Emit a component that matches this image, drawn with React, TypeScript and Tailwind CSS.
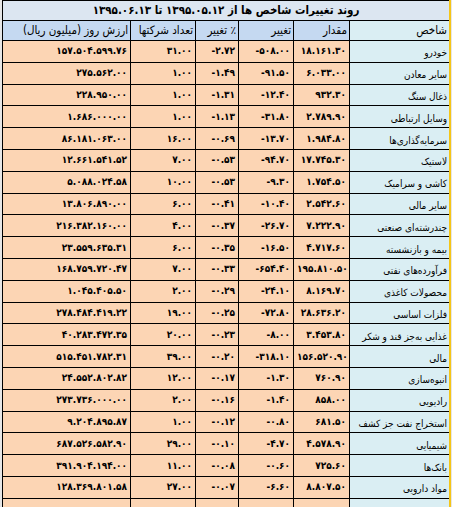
type Row = {
  name: string
  amount: string
  change: string
  percent: string
  count: string
  value: string
}

const rows: Row[] = [
  { name: 'خودرو', amount: '۱۸.۱۶۱.۳۰', change: '-۵۰۸.۰۰', percent: '-۲.۷۲', count: '۳۱.۰۰', value: '۱۵۷.۵۰۴.۵۹۹.۷۶' },
  { name: 'سایر معادن', amount: '۶.۰۳۳.۰۰', change: '-۹۱.۵۰', percent: '-۱.۴۹', count: '۱.۰۰', value: '۲۷۵.۵۶۲.۰۰' },
  { name: 'ذغال سنگ', amount: '۹۳۲.۳۰', change: '-۱۲.۴۰', percent: '-۱.۳۱', count: '۱.۰۰', value: '۲۲۸.۹۵۰.۰۰' },
  { name: 'وسایل ارتباطی', amount: '۲.۷۸۹.۹۰', change: '-۳۱.۸۰', percent: '-۱.۱۳', count: '۱.۰۰', value: '۱.۶۸۶.۰۰۰.۰۰' },
  { name: 'سرمایه‌گذاری‌ها', amount: '۱.۹۸۴.۸۰', change: '-۱۳.۷۰', percent: '-۰.۶۹', count: '۱۶.۰۰', value: '۸۶.۱۸۱.۰۶۳.۰۰' },
  { name: 'لاستیک', amount: '۱۷.۷۴۵.۳۰', change: '-۹۴.۷۰', percent: '-۰.۵۳', count: '۷.۰۰', value: '۱۲.۶۶۱.۵۴۱.۵۲' },
  { name: 'کاشی و سرامیک', amount: '۱.۷۵۴.۵۰', change: '-۹.۳۰', percent: '-۰.۵۳', count: '۱۰.۰۰', value: '۵.۰۸۸.۰۲۴.۵۸' },
  { name: 'سایر مالی', amount: '۲.۵۴۲.۶۰', change: '-۱۰.۴۰', percent: '-۰.۴۱', count: '۶.۰۰', value: '۱۳.۸۰۶.۸۹۰.۰۰' },
  { name: 'چندرشته‌ای صنعتی', amount: '۷.۲۲۲.۹۰', change: '-۲۶.۷۰', percent: '-۰.۳۷', count: '۴.۰۰', value: '۲۱۶.۳۸۲.۱۶۰.۰۰' },
  { name: 'بیمه و بازنشسته', amount: '۴.۷۱۷.۶۰', change: '-۱۶.۵۰', percent: '-۰.۳۵', count: '۶.۰۰', value: '۲۳.۵۵۹.۶۳۵.۳۱' },
  { name: 'فرآورده‌های نفتی', amount: '۱۹۵.۸۱۰.۵۰', change: '-۶۵۴.۴۰', percent: '-۰.۳۳', count: '۷.۰۰', value: '۱۶۸.۷۵۹.۷۲۰.۴۷' },
  { name: 'محصولات کاغذی', amount: '۸.۱۶۹.۷۰', change: '-۲۴.۱۰', percent: '-۰.۲۹', count: '۲.۰۰', value: '۱.۰۴۵.۴۰۵.۵۰' },
  { name: 'فلزات اساسی', amount: '۲۸.۶۳۶.۲۰', change: '-۷۲.۸۰', percent: '-۰.۲۵', count: '۱۹.۰۰', value: '۲۷۸.۴۸۴.۴۱۹.۲۲' },
  { name: 'غذایی به‌جز قند و شکر', amount: '۳.۴۵۳.۸۰', change: '-۸.۰۰', percent: '-۰.۲۳', count: '۲۰.۰۰', value: '۴۰.۲۸۳.۴۷۲.۳۵' },
  { name: 'مالی', amount: '۱۵۶.۵۲۰.۹۰', change: '-۳۱۸.۱۰', percent: '-۰.۲۰', count: '۳۹.۰۰', value: '۵۱۵.۴۵۱.۷۸۲.۳۱' },
  { name: 'انبوه‌سازی', amount: '۷۶۰.۹۰', change: '-۱.۳۰', percent: '-۰.۱۷', count: '۱۲.۰۰', value: '۲۴.۵۵۲.۸۰۲.۸۲' },
  { name: 'رادیویی', amount: '۸۵۸.۰۰', change: '-۱.۴۰', percent: '-۰.۱۶', count: '۲.۰۰', value: '۲۷۳.۷۳۶.۰۰۰.۰۰' },
  { name: 'استخراج نفت جز کشف', amount: '۶۸۱.۵۰', change: '-۰.۸۰', percent: '-۰.۱۲', count: '۱.۰۰', value: '۹.۲۰۴.۸۹۵.۸۷' },
  { name: 'شیمیایی', amount: '۴.۵۷۸.۹۰', change: '-۴.۷۰', percent: '-۰.۱۰', count: '۲۹.۰۰', value: '۶۸۷.۵۲۶.۵۸۲.۹۰' },
  { name: 'بانک‌ها', amount: '۷۲۵.۶۰', change: '-۰.۶۰', percent: '-۰.۰۸', count: '۱۱.۰۰', value: '۳۹۱.۹۰۴.۱۹۴.۰۰' },
  { name: 'مواد دارویی', amount: '۸.۸۰۷.۵۰', change: '-۶.۶۰', percent: '-۰.۰۷', count: '۲۷.۰۰', value: '۱۲۸.۳۶۹.۸۰۱.۵۸' },
]

function NumCell({ children }: { children?: string }) {
  return (
    <td className="border border-black bg-[#fcd5b4] px-[3px] text-[10px] font-bold leading-none tracking-[-0.4px] whitespace-nowrap overflow-hidden">
      <span dir="ltr" className="block text-right">{children}</span>
    </td>
  )
}

export default function App() {
  return (
    <div className="w-[452px] h-[507px] overflow-hidden bg-[#e6e6e6] flex font-['DejaVu_Sans_Condensed','DejaVu_Sans',sans-serif] text-black">
      <div className="ml-[2px] w-[447px] shrink-0">
        <table dir="rtl" className="w-[447px] table-fixed border-collapse">
          <colgroup>
            <col className="w-[100px]" />
            <col className="w-[56px]" />
            <col className="w-[55px]" />
            <col className="w-[43px]" />
            <col className="w-[65px]" />
            <col className="w-[128px]" />
          </colgroup>
          <thead>
            <tr className="h-[20px]">
              <th colSpan={6} className="border border-black bg-[#dce6f1] text-center text-[11.5px] font-bold leading-none">
                روند تغییرات شاخص ها از ۱۳۹۵.۰۵.۱۲ تا ۱۳۹۵.۰۶.۱۳
              </th>
            </tr>
            <tr className="h-[20px] bg-[#c5d9f1] text-[11.5px]">
              <th className="border border-black bg-[#daeef3] px-[2px] text-right font-normal leading-none">شاخص</th>
              <th className="border border-black px-[2px] text-right font-normal leading-none">مقدار</th>
              <th className="border border-black px-[2px] text-right font-normal leading-none">تغییر</th>
              <th className="border border-black px-[2px] text-right font-normal leading-none whitespace-nowrap">٪ تغییر</th>
              <th className="border border-black px-[2px] text-right font-normal leading-none whitespace-nowrap overflow-hidden tracking-[-0.5px]">تعداد شرکتها</th>
              <th className="border border-black px-[2px] text-right font-normal leading-none whitespace-nowrap overflow-hidden">ارزش روز (میلیون ریال)</th>
            </tr>
          </thead>
          <tbody>
            {rows.map((r) => (
              <tr key={r.name} className="h-[21.8px]">
                <td className="border border-black bg-[#daeef3] px-[2px] pt-[4px] text-right text-[10px] leading-none whitespace-nowrap overflow-hidden">
                  {r.name}
                </td>
                <NumCell>{r.amount}</NumCell>
                <NumCell>{r.change}</NumCell>
                <NumCell>{r.percent}</NumCell>
                <NumCell>{r.count}</NumCell>
                <NumCell>{r.value}</NumCell>
              </tr>
            ))}
            <tr className="h-[21.8px]">
              <td className="border border-black bg-[#daeef3]" />
              <NumCell />
              <NumCell />
              <NumCell />
              <NumCell />
              <NumCell />
            </tr>
          </tbody>
        </table>
      </div>
      <div className="w-[2px] shrink-0 bg-[#f5c518]" />
    </div>
  )
}
